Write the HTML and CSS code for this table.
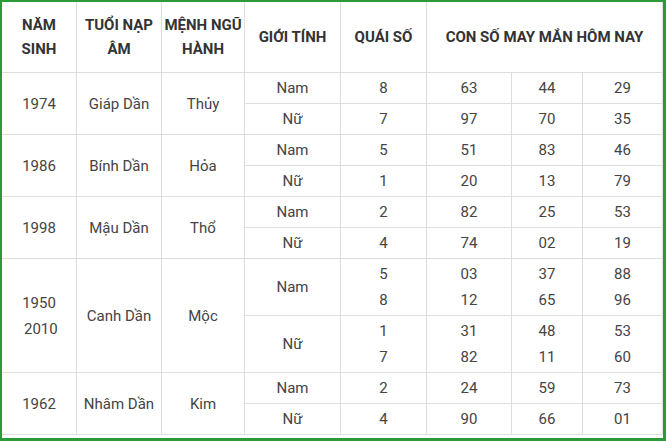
FILE: index.html
```html
<!DOCTYPE html>
<html lang="vi">
<head>
<meta charset="utf-8">
<title>Con số may mắn</title>
<link rel="stylesheet" href="styles.css">
</head>
<body>
<div class="frame">
<table class="lucky">
<colgroup>
<col class="c1"><col class="c2"><col class="c3"><col class="c4"><col class="c5"><col class="c6"><col class="c7"><col class="c8">
</colgroup>
<thead>
<tr class="head">
<th>NĂM<br>SINH</th>
<th>TUỔI NẠP<br>ÂM</th>
<th>MỆNH NGŨ<br>HÀNH</th>
<th>GIỚI TÍNH</th>
<th>QUÁI SỐ</th>
<th colspan="3">CON SỐ MAY MẮN HÔM NAY</th>
</tr>
</thead>
<tbody>
<tr class="r1">
<td rowspan="2">1974</td><td rowspan="2">Giáp Dần</td><td rowspan="2">Thủy</td>
<td>Nam</td><td>8</td><td>63</td><td>44</td><td>29</td>
</tr>
<tr class="r1"><td>Nữ</td><td>7</td><td>97</td><td>70</td><td>35</td></tr>
<tr class="r1">
<td rowspan="2">1986</td><td rowspan="2">Bính Dần</td><td rowspan="2">Hỏa</td>
<td>Nam</td><td>5</td><td>51</td><td>83</td><td>46</td>
</tr>
<tr class="r1"><td>Nữ</td><td>1</td><td>20</td><td>13</td><td>79</td></tr>
<tr class="r1">
<td rowspan="2">1998</td><td rowspan="2">Mậu Dần</td><td rowspan="2">Thổ</td>
<td>Nam</td><td>2</td><td>82</td><td>25</td><td>53</td>
</tr>
<tr class="r1"><td>Nữ</td><td>4</td><td>74</td><td>02</td><td>19</td></tr>
<tr class="r2">
<td rowspan="2">1950<br>&nbsp;2010</td><td rowspan="2">Canh Dần</td><td rowspan="2">Mộc</td>
<td>Nam</td><td>5<br>8</td><td>03<br>12</td><td>37<br>65</td><td>88<br>96</td>
</tr>
<tr class="r2"><td>Nữ</td><td>1<br>7</td><td>31<br>82</td><td>48<br>11</td><td>53<br>60</td></tr>
<tr class="r1">
<td rowspan="2">1962</td><td rowspan="2">Nhâm Dần</td><td rowspan="2">Kim</td>
<td>Nam</td><td>2</td><td>24</td><td>59</td><td>73</td>
</tr>
<tr class="r1"><td>Nữ</td><td>4</td><td>90</td><td>66</td><td>01</td></tr>
</tbody>
</table>
</div>
</body>
</html>
```
FILE: styles.css
```css
html, body {
  margin: 0;
  padding: 0;
  background: #fff;
}
.frame {
  box-sizing: border-box;
  width: 666px;
  height: 441px;
  border-style: solid;
  border-color: #2b9b37;
  border-width: 2px 3px 3px 2px;
  padding-bottom: 3px;
  background: #fff;
}
.lucky {
  table-layout: fixed;
  width: 661px;
  border-collapse: separate;
  border-spacing: 0;
  font-family: Roboto, "Noto Sans", sans-serif;
  font-size: 15px;
  color: #444;
}
.c1 { width: 75px; }
.c2 { width: 85px; }
.c3 { width: 83px; }
.c4 { width: 96px; }
.c5 { width: 86px; }
.c6 { width: 85px; }
.c7 { width: 71px; }
.c8 { width: 80px; }
.lucky th, .lucky td {
  box-sizing: border-box;
  padding: 0;
  text-align: center;
  vertical-align: middle;
  border-right: 1px solid #dedede;
  border-bottom: 1px solid #dedede;
}
.lucky th {
  font-weight: 700;
  color: #333;
  line-height: 24px;
}
.head { height: 71px; }
.r1 { height: 31px; }
.r1 td { line-height: 18px; }
.r2 { height: 57px; }
.r2 td { line-height: 26px; }
```
